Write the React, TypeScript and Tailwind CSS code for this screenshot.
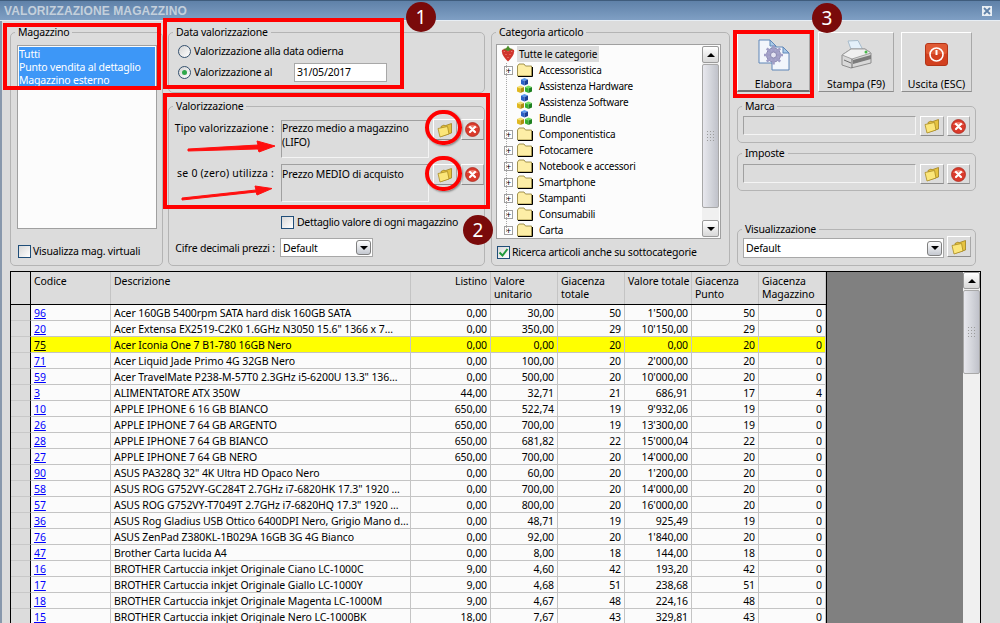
import React from 'react';

const ROWS: string[][] = [
  ['96', 'Acer 160GB 5400rpm SATA hard disk 160GB SATA', '0,00', '30,00', '50', "1'500,00", '50', '0'],
  ['20', 'Acer Extensa EX2519-C2K0 1.6GHz N3050 15.6" 1366 x 7…', '0,00', '350,00', '29', "10'150,00", '29', '0'],
  ['75', 'Acer Iconia One 7 B1-780 16GB Nero', '0,00', '0,00', '20', '0,00', '20', '0'],
  ['71', 'Acer Liquid Jade Primo 4G 32GB Nero', '0,00', '100,00', '20', "2'000,00", '20', '0'],
  ['59', 'Acer TravelMate P238-M-57T0 2.3GHz i5-6200U 13.3" 136…', '0,00', '500,00', '20', "10'000,00", '20', '0'],
  ['3', 'ALIMENTATORE ATX 350W', '44,00', '32,71', '21', '686,91', '17', '4'],
  ['10', 'APPLE IPHONE 6 16 GB BIANCO', '650,00', '522,74', '19', "9'932,06", '19', '0'],
  ['26', 'APPLE IPHONE 7 64 GB ARGENTO', '650,00', '700,00', '19', "13'300,00", '19', '0'],
  ['28', 'APPLE IPHONE 7 64 GB BIANCO', '650,00', '681,82', '22', "15'000,04", '22', '0'],
  ['27', 'APPLE IPHONE 7 64 GB NERO', '650,00', '700,00', '20', "14'000,00", '20', '0'],
  ['90', 'ASUS PA328Q 32" 4K Ultra HD Opaco Nero', '0,00', '60,00', '20', "1'200,00", '20', '0'],
  ['58', 'ASUS ROG G752VY-GC284T 2.7GHz i7-6820HK 17.3" 1920 …', '0,00', '700,00', '20', "14'000,00", '20', '0'],
  ['57', 'ASUS ROG G752VY-T7049T 2.7GHz i7-6820HQ 17.3" 1920 …', '0,00', '800,00', '20', "16'000,00", '20', '0'],
  ['36', 'ASUS Rog Gladius USB Ottico 6400DPI Nero, Grigio Mano d…', '0,00', '48,71', '19', '925,49', '19', '0'],
  ['76', 'ASUS ZenPad Z380KL-1B029A 16GB 3G 4G Bianco', '0,00', '92,00', '20', "1'840,00", '20', '0'],
  ['47', 'Brother Carta lucida A4', '0,00', '8,00', '18', '144,00', '18', '0'],
  ['16', 'BROTHER Cartuccia inkjet Originale Ciano LC-1000C', '9,00', '4,60', '42', '193,20', '42', '0'],
  ['17', 'BROTHER Cartuccia inkjet Originale Giallo LC-1000Y', '9,00', '4,68', '51', '238,68', '51', '0'],
  ['18', 'BROTHER Cartuccia inkjet Originale Magenta LC-1000M', '9,00', '4,67', '48', '224,16', '48', '0'],
  ['15', 'BROTHER Cartuccia inkjet Originale Nero LC-1000BK', '18,00', '7,67', '43', '329,81', '43', '0'],
];

const TREE: { label: string; kind: 'folder' | 'cubes' }[] = [
  { label: 'Accessoristica', kind: 'folder' },
  { label: 'Assistenza Hardware', kind: 'cubes' },
  { label: 'Assistenza Software', kind: 'cubes' },
  { label: 'Bundle', kind: 'cubes' },
  { label: 'Componentistica', kind: 'folder' },
  { label: 'Fotocamere', kind: 'folder' },
  { label: 'Notebook e accessori', kind: 'folder' },
  { label: 'Smartphone', kind: 'folder' },
  { label: 'Stampanti', kind: 'folder' },
  { label: 'Consumabili', kind: 'folder' },
  { label: 'Carta', kind: 'folder' },
];

const raised = 'border border-t-white border-l-white border-r-[#a8a8a8] border-b-[#8c8c8c] bg-[#dcdcdc]';
const sunken = 'border border-t-[#a0a0a0] border-l-[#a0a0a0] border-r-[#f4f4f4] border-b-[#f4f4f4] bg-[#dcdcdc]';

const FolderIcon = () => (
  <svg width="16" height="16" viewBox="0 0 16 16">
    <path d="M4 4.5 L7 3 L8 3.8 L14.5 1.5 L14.5 11 L5 14 Z" fill="#e6c340" stroke="#a0801c" strokeWidth="0.8" />
    <path d="M1 6.5 L10.5 4.5 L12 12 L3 15 Z" fill="#fbe67a" stroke="#ab8b22" strokeWidth="0.8" />
  </svg>
);

const DeleteIcon = () => (
  <svg width="15" height="15" viewBox="0 0 15 15">
    <circle cx="7.5" cy="7.5" r="7" fill="#d93a2b" stroke="#a82218" strokeWidth="0.7" />
    <path d="M2 6 A6 5 0 0 1 13 6 Z" fill="#ee7d6d" />
    <path d="M5 5 L10 10 M10 5 L5 10" stroke="#fff" strokeWidth="2.2" strokeLinecap="round" />
  </svg>
);

const FolderButton = ({ tall }: { tall?: boolean }) => (
  <div className={`${raised} w-[24px] ${tall ? 'h-[21px]' : 'h-[20px]'} flex items-center justify-center shrink-0`}>
    <FolderIcon />
  </div>
);

const DeleteButton = ({ tall }: { tall?: boolean }) => (
  <div className={`${raised} w-[23px] ${tall ? 'h-[21px]' : 'h-[20px]'} flex items-center justify-center shrink-0`}>
    <DeleteIcon />
  </div>
);

const Group = ({ title, className, children }: { title: string; className?: string; children?: React.ReactNode }) => (
  <fieldset className={`border border-[#b4b4b4] rounded-[5px] min-w-0 ${className ?? ''}`}>
    <legend className="ml-[4px] px-[3px] leading-[13px]">{title}</legend>
    {children}
  </fieldset>
);

const Checkbox = ({ checked }: { checked?: boolean }) => (
  <div className="w-[13px] h-[13px] border border-[#1f4e79] bg-gradient-to-br from-[#d8d8d8] to-white flex items-center justify-center shrink-0">
    {checked && (
      <svg width="11" height="11" viewBox="0 0 11 11">
        <path d="M1.5 5.5 L4.5 8.5 L9.5 2" fill="none" stroke="#1f9a3c" strokeWidth="2" />
      </svg>
    )}
  </div>
);

const Radio = ({ checked }: { checked?: boolean }) => (
  <div className="w-[13px] h-[13px] rounded-full border border-[#34506e] bg-gradient-to-br from-[#d4d4d4] to-white flex items-center justify-center shrink-0">
    {checked && <div className="w-[5px] h-[5px] rounded-full bg-[#2fa84a]" />}
  </div>
);

const SelectBox = ({ className }: { className: string }) => (
  <div className={`${className} border border-[#a8a8a8] bg-white flex items-center justify-between pl-[2px] pr-[1px] shrink-0`}>
    <span>Default</span>
    <div className="w-[15px] h-[15px] rounded-[3px] border border-[#808080] bg-gradient-to-b from-white to-[#c4c8d0] flex items-center justify-center">
      <div className="w-0 h-0 border-x-[4px] border-x-transparent border-t-[4px] border-t-black" />
    </div>
  </div>
);

const Scrollbar = ({ thumb, className }: { thumb: number; className: string }) => (
  <div className={`${className} flex flex-col bg-[#f0f0f0] shrink-0`}>
    <div className="h-[17px] border border-[#9a9a9a] rounded-[2px] bg-gradient-to-b from-white to-[#d8d8d8] flex items-center justify-center shrink-0">
      <div className="w-0 h-0 border-x-[4px] border-x-transparent border-b-[4px] border-b-black" />
    </div>
    <div
      className="mt-[1px] border border-[#a8a8a8] rounded-[2px] bg-gradient-to-r from-[#e8e8ee] via-[#d4d6dc] to-[#c0c2ca] flex items-center justify-center shrink-0"
      style={{ height: thumb }}
    >
      <div className="grid grid-cols-3 gap-[2px]">
        {Array.from({ length: 12 }).map((_, i) => (
          <div key={i} className="w-[1px] h-[1px] bg-[#9c9c9c]" />
        ))}
      </div>
    </div>
    <div className="flex-1" />
    <div className="h-[17px] border border-[#9a9a9a] rounded-[2px] bg-gradient-to-b from-white to-[#d8d8d8] flex items-center justify-center shrink-0">
      <div className="w-0 h-0 border-x-[4px] border-x-transparent border-t-[4px] border-t-black" />
    </div>
  </div>
);

const TreeFolder = () => (
  <svg width="16" height="14" viewBox="0 0 16 14">
    <path d="M0.5 3 L2 1 L7 1 L8.5 3 L14.5 3 L14.5 13 L0.5 13 Z" fill="#fdeea6" stroke="#8a7a30" strokeWidth="0.8" />
    <path d="M1 13.5 L15.5 13.5 L15.5 4" fill="none" stroke="#000" strokeWidth="1" />
  </svg>
);

const Cube = ({ x, y, top, left, right }: { x: number; y: number; top: string; left: string; right: string }) => (
  <g transform={`translate(${x} ${y})`}>
    <path d="M0 1.5 L3.5 0 L7 1.5 L3.5 3 Z" fill={top} />
    <path d="M0 1.5 L3.5 3 L3.5 7.5 L0 6 Z" fill={left} />
    <path d="M7 1.5 L3.5 3 L3.5 7.5 L7 6 Z" fill={right} />
  </g>
);

const CubesIcon = () => (
  <svg width="16" height="16" viewBox="0 0 16 16">
    <Cube x={4} y={0} top="#5b9bf0" left="#2a62c8" right="#1a3f96" />
    <Cube x={0} y={7.5} top="#f5e070" left="#e0b820" right="#b08c10" />
    <Cube x={8} y={7.5} top="#70e060" left="#34b030" right="#1e8020" />
  </svg>
);

const Strawberry = () => (
  <svg width="14" height="17" viewBox="0 0 14 17" className="shrink-0">
    <path d="M1 5 Q7 1.5 13 5 Q14 10 7 16.5 Q0 10 1 5 Z" fill="#d0342c" />
    <path d="M3 6 L3.5 7 M7 5.5 L7 6.5 M11 6 L10.5 7 M5 9 L5 10 M9 9 L9 10 M7 12 L7 13" stroke="#f3a89a" strokeWidth="0.8" />
    <path d="M2 4 L5 3.5 L7 0.5 L9 3.5 L12 4 L7 6 Z" fill="#4b8f2a" />
  </svg>
);

const ElaboraIcon = () => (
  <svg width="32" height="32" viewBox="0 0 32 32" className="shrink-0">
    <path d="M1 1 L12 1 L18 7 L18 24 L1 24 Z" fill="#f2f6fc" stroke="#5f86b8" />
    <path d="M12 1 L12 7 L18 7 Z" fill="#a9cbe8" stroke="#5f86b8" />
    <path d="M14 8 L25 8 L31 14 L31 31 L14 31 Z" fill="#f2f6fc" stroke="#5f86b8" />
    <path d="M25 8 L25 14 L31 14 Z" fill="#a9cbe8" stroke="#5f86b8" />
    <circle cx="15.5" cy="16" r="7" fill="#a8a6cc" stroke="#8a88b0" />
    <path d="M15.5 6.5 L15.5 25.5 M6 16 L25 16 M8.8 9.3 L22.2 22.7 M22.2 9.3 L8.8 22.7" stroke="#a09ec6" strokeWidth="2.6" />
    <circle cx="15.5" cy="16" r="3" fill="#e4e4f2" stroke="#8a88b0" />
  </svg>
);

const PrinterIcon = () => (
  <svg width="31" height="29" viewBox="0 0 31 29" className="shrink-0">
    <path d="M7 1 L17 0.5 L22 10 L11 12 Z" fill="#e4f0fa" stroke="#a8bccc" />
    <path d="M1 15 L10 9 L24 9 L30 13 L30 23 L10 28 L1 25 Z" fill="#d8d8d8" stroke="#8c8c8c" />
    <path d="M1 15 L11 19 L30 13 L24 9 L10 9 Z" fill="#f0f0f0" stroke="#a0a0a0" />
    <path d="M11 19 L11 28 M3 20 L10 23 M12 23 L29 18" stroke="#6c6c6c" />
    <path d="M12 20 L30 15 L30 19 L12 24 Z" fill="#7c7c7c" />
    <circle cx="25" cy="12" r="1.5" fill="#49b84a" />
  </svg>
);

const PowerIcon = () => (
  <svg width="23" height="23" viewBox="0 0 23 23" className="shrink-0">
    <rect x="0.5" y="0.5" width="22" height="22" rx="2.5" fill="#d2401f" stroke="#b23418" />
    <rect x="1" y="1" width="21" height="10" rx="2" fill="#e05a34" />
    <circle cx="11.5" cy="11.5" r="6.5" fill="none" stroke="#fff" strokeWidth="1.6" />
    <path d="M11.5 7 L11.5 12" stroke="#fff" strokeWidth="2" />
  </svg>
);

const Badge = ({ n, className }: { n: string; className: string }) => (
  <div className={`absolute w-[30px] h-[30px] rounded-full bg-[#7a0a0a] text-white text-[19px] tracking-normal flex items-center justify-center ${className}`}>
    {n}
  </div>
);

const HEADERS = [
  { label: 'Codice', w: 'w-[80px]' },
  { label: 'Descrizione', w: 'w-[300px]' },
  { label: 'Listino', w: 'w-[80px]', right: true },
  { label: 'Valore unitario', w: 'w-[67px]' },
  { label: 'Giacenza totale', w: 'w-[67px]' },
  { label: 'Valore totale', w: 'w-[67px]', nowrap: true },
  { label: 'Giacenza Punto', w: 'w-[67px]' },
  { label: 'Giacenza Magazzino', w: 'w-[67px]' },
];

export default function App() {
  return (
    <div className="relative w-[1000px] h-[623px] overflow-hidden bg-[#dcdcdc] text-[10.5px] tracking-[-0.2px] text-black font-['Noto_Sans',sans-serif] leading-[14px]">
      {/* Title bar */}
      <div className="h-[21px] bg-gradient-to-b from-[#5f81a8] to-[#7f9fc4] border-t border-t-[#3f5c7c] border-b border-b-[#e8eef4] flex items-center justify-between pl-[4px] pr-[8px]">
        <span className="font-bold text-[12px] text-[#c4d0dc] font-['Liberation_Sans',sans-serif] tracking-[0.1px]">VALORIZZAZIONE MAGAZZINO</span>
        <div className="w-[10px] h-[10px] bg-[#e8eef4] flex items-center justify-center">
          <svg width="8" height="8" viewBox="0 0 8 8">
            <path d="M1 1 L7 7 M7 1 L1 7" stroke="#5f81a8" strokeWidth="1.8" />
          </svg>
        </div>
      </div>

      <div className="border-l-2 border-l-[#8898ac] pl-[8px] pt-[5px]">
        {/* Filters */}
        <div className="flex h-[240px]">
          <Group title="Magazzino" className="w-[153px]">
            <div className="pl-[6px] pt-[6px]">
              <div className="w-[140px] h-[184px] border border-[#a0a0a0] bg-[#fcfcfc] p-[1px]">
                <div className="bg-[#3d97f7] text-white py-[1px] leading-[13px]">
                  <div>Tutti</div>
                  <div>Punto vendita al dettaglio</div>
                  <div>Magazzino esterno</div>
                </div>
              </div>
              <div className="flex items-center gap-[2px] mt-[15px] ml-[1px]">
                <Checkbox />
                <span>Visualizza mag. virtuali</span>
              </div>
            </div>
          </Group>

          <div className="w-[317px] ml-[5px] flex flex-col gap-[7px]">
            <Group title="Data valorizzazione" className="h-[67px]">
              <div className="pl-[9px] pt-[4px]">
                <div className="flex items-center gap-[3px] h-[16px]">
                  <Radio />
                  <span>Valorizzazione alla data odierna</span>
                </div>
                <div className="flex items-center mt-[3px] h-[20px]">
                  <div className="flex items-center gap-[3px] w-[116px]">
                    <Radio checked />
                    <span>Valorizzazione al</span>
                  </div>
                  <div className="w-[93px] h-[19px] border border-[#a8a8a8] bg-white flex items-center pl-[2px]">31/05/2017</div>
                </div>
              </div>
            </Group>

            <Group title="Valorizzazione" className="h-[166px]">
              <div className="pt-[7px]">
                <div className="flex items-start">
                  <div className="w-[105px] text-right pt-[1px] whitespace-nowrap tracking-normal">Tipo valorizzazione :</div>
                  <div className={`${sunken} w-[148px] h-[38px] ml-[7px]`}>
                    Prezzo medio a magazzino (LIFO)
                  </div>
                  <div className="ml-[4px] -mt-[1px]"><FolderButton tall /></div>
                  <div className="ml-[4px] -mt-[1px]"><DeleteButton tall /></div>
                </div>
                <div className="flex items-start mt-[6px]">
                  <div className="w-[105px] text-right pt-[2px] whitespace-nowrap tracking-[0.2px]">se 0 (zero) utilizza :</div>
                  <div className={`${sunken} w-[148px] h-[38px] ml-[7px] pt-[2px]`}>Prezzo MEDIO di acquisto</div>
                  <div className="ml-[4px]"><FolderButton tall /></div>
                  <div className="ml-[4px]"><DeleteButton tall /></div>
                </div>
                <div className="flex items-center gap-[3px] mt-[13px] ml-[112px]">
                  <Checkbox />
                  <span className="tracking-[-0.3px]">Dettaglio valore di ogni magazzino</span>
                </div>
                <div className="flex items-center mt-[9px]">
                  <div className="w-[106px] text-right whitespace-nowrap">Cifre decimali prezzi :</div>
                  <SelectBox className="ml-[5px] w-[93px] h-[19px]" />
                </div>
              </div>
            </Group>
          </div>

          <Group title="Categoria articolo" className="w-[239px] ml-[6px]">
            <div className="pl-[4px] pt-[5px]">
              <div className="relative w-[225px] h-[195px] border border-[#a0a0a0] bg-[#fcfcfc] flex">
                <div className="flex-1 text-[10px] leading-[16px]">
                  <div className="flex items-center h-[17px] pl-[4px]">
                    <Strawberry />
                    <span className="ml-[2px] bg-[#dcdcdc] px-[2px] whitespace-nowrap">Tutte le categorie</span>
                  </div>
                  {TREE.map((item) => (
                    <div key={item.label} className="flex items-center h-[16px]">
                      <div className="w-[21px] flex justify-end items-center shrink-0">
                        {item.kind === 'folder' ? (
                          <div className="w-[9px] h-[9px] border border-[#a0a0a0] bg-white flex items-center justify-center text-[9px] leading-[7px] text-black mr-[5px]">+</div>
                        ) : null}
                      </div>
                      <div className="w-[16px] flex justify-center shrink-0 -ml-[1px]">
                        {item.kind === 'folder' ? <TreeFolder /> : <CubesIcon />}
                      </div>
                      <span className="ml-[6px]">{item.label}</span>
                    </div>
                  ))}
                </div>
                <Scrollbar thumb={144} className="w-[17px] mr-[1px] mt-[1px] mb-[1px]" />
                {/* tree guide line */}
                <div className="absolute left-[9px] top-[18px] bottom-[6px] border-l border-dotted border-l-[#a8a8a8]" />
              </div>
              <div className="flex items-center gap-[2px] mt-[6px] ml-[1px]">
                <Checkbox checked />
                <span className="whitespace-nowrap">Ricerca articoli anche su sottocategorie</span>
              </div>
            </div>
          </Group>

          {/* Actions */}
          <div className="w-[239px] ml-[7px] flex flex-col">
            <div className="flex pt-[6px] h-[74px] whitespace-nowrap tracking-normal">
              <div className={`${raised} border-b-2 border-b-[#707070] w-[73px] h-[60px] flex flex-col items-center pt-[6px]`}>
                <ElaboraIcon />
                <span className="mt-[6px]">Elabora</span>
              </div>
              <div className={`${raised} w-[76px] h-[60px] ml-[8px] flex flex-col items-center pt-[7px]`}>
                <PrinterIcon />
                <span className="mt-[8px]">Stampa (F9)</span>
              </div>
              <div className={`${raised} w-[71px] h-[60px] ml-[7px] flex flex-col items-center pt-[10px]`}>
                <PowerIcon />
                <span className="mt-[11px]">Uscita (ESC)</span>
              </div>
            </div>
            <Group title="Marca" className="h-[43px]">
              <div className="flex pl-[5px] pt-[3px]">
                <div className={`${sunken} w-[173px] h-[19px]`} />
                <div className="ml-[4px]"><FolderButton /></div>
                <div className="ml-[3px]"><DeleteButton /></div>
              </div>
            </Group>
            <Group title="Imposte" className="h-[44px] mt-[4px]">
              <div className="flex pl-[5px] pt-[4px]">
                <div className={`${sunken} w-[173px] h-[19px]`} />
                <div className="ml-[4px]"><FolderButton /></div>
                <div className="ml-[3px]"><DeleteButton /></div>
              </div>
            </Group>
            <Group title="Visualizzazione" className="h-[43px] mt-auto">
              <div className="flex items-start pl-[5px]">
                <SelectBox className="w-[201px] h-[20px] mt-[2px]" />
                <div className="ml-[3px]"><FolderButton tall /></div>
              </div>
            </Group>
          </div>
        </div>

        {/* Grid */}
        <div className="mt-[5px] w-[971px] border border-black bg-[#808080] flex h-[400px] tracking-[-0.08px]">
          <div className="w-[816px] shrink-0 border-r border-r-black bg-[#fbfbfb]">
            <div className="flex h-[33px] border-b border-b-black bg-[#dcdcdc]">
              <div className="w-[20px] shrink-0 border-r border-r-black" />
              {HEADERS.map((h) => (
                <div
                  key={h.label}
                  className={`${h.w} shrink-0 border-r border-r-[#c4c4c4] px-[3px] pt-[3px] leading-[13px] ${h.right ? 'text-right' : ''} ${h.nowrap ? 'whitespace-nowrap' : ''}`}
                >
                  {h.label}
                </div>
              ))}
            </div>
            {ROWS.map((r) => {
              const hl = r[0] === '75';
              const cell = `h-[16px] shrink-0 border-r border-r-[#c4c4c4] border-b border-b-[#c4c4c4] px-[3px] leading-[17px] whitespace-nowrap overflow-hidden ${hl ? 'bg-[#ffff00]' : ''}`;
              return (
                <div key={r[0]} className="flex">
                  <div className="w-[20px] h-[16px] shrink-0 border-r border-r-black border-b border-b-[#c8c8c8] bg-[#dcdcdc]" />
                  <div className={`${cell} w-[80px]`}>
                    <span className={`underline ${hl ? 'text-black' : 'text-[#0000ff]'}`}>{r[0]}</span>
                  </div>
                  <div className={`${cell} w-[300px]`}>{r[1]}</div>
                  <div className={`${cell} w-[80px] text-right`}>{r[2]}</div>
                  <div className={`${cell} w-[67px] text-right`}>{r[3]}</div>
                  <div className={`${cell} w-[67px] text-right`}>{r[4]}</div>
                  <div className={`${cell} w-[67px] text-right`}>{r[5]}</div>
                  <div className={`${cell} w-[67px] text-right`}>{r[6]}</div>
                  <div className={`${cell} w-[67px] text-right`}>{r[7]}</div>
                </div>
              );
            })}
          </div>
          <div className="flex-1" />
          <Scrollbar thumb={84} className="w-[17px]" />
        </div>
      </div>

      {/* Red annotations drawn over the screenshot */}
      <div className="absolute left-[3px] top-[23px] w-[158px] h-[67px] border-4 border-[#ff0000]" />
      <div className="absolute left-[163px] top-[18px] w-[241px] h-[71px] border-4 border-[#ff0000]" />
      <div className="absolute left-[163px] top-[93px] w-[327px] h-[116px] border-4 border-[#ff0000]" />
      <div className="absolute left-[733px] top-[30px] w-[81px] h-[68px] border-4 border-[#ff0000]" />
      <div className="absolute left-[425px] top-[110px] w-[37px] h-[35px] rounded-full border-4 border-[#ff0000] shadow-[1px_1px_2px_rgba(0,0,0,0.4)]" />
      <div className="absolute left-[425px] top-[156px] w-[37px] h-[35px] rounded-full border-4 border-[#ff0000] shadow-[1px_1px_2px_rgba(0,0,0,0.4)]" />
      <svg className="absolute left-0 top-0 pointer-events-none" width="1000" height="623">
        <path d="M188 149 L258 145 L257 141 L275 146 L259 152 L258 149 L188 151 Z" fill="#ff1010" stroke="#ff1010" strokeWidth="1" />
        <path d="M182 198 L256 190 L255 186 L272 188.5 L257 195 L256 192 L182 200 Z" fill="#ff1010" stroke="#ff1010" strokeWidth="1" />
      </svg>
      <Badge n="1" className="left-[406px] top-[2px]" />
      <Badge n="2" className="left-[463px] top-[215px]" />
      <Badge n="3" className="left-[812px] top-[3px]" />
    </div>
  );
}
